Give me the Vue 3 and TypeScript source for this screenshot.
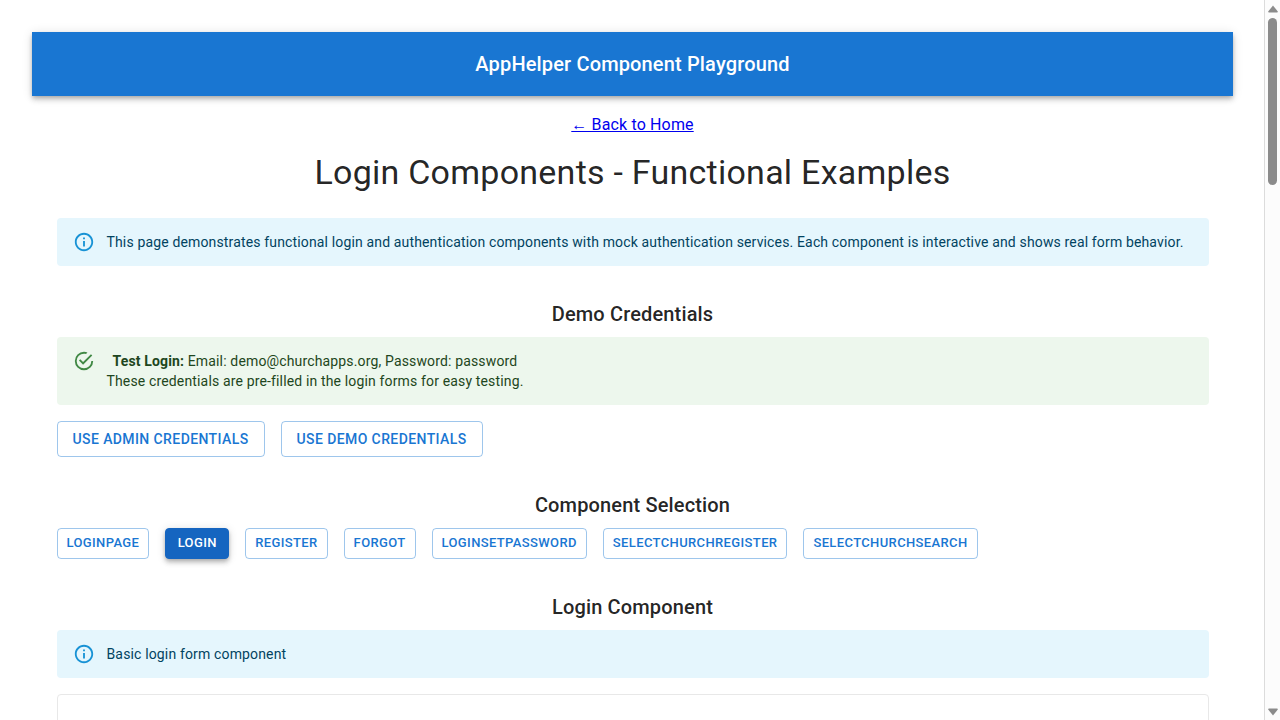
<script setup lang="ts">
import { ref } from 'vue'

const components: string[] = [
  'LoginPage',
  'Login',
  'Register',
  'Forgot',
  'LoginSetPassword',
  'SelectChurchRegister',
  'SelectChurchSearch',
]
const selected = ref<string>('Login')

const infoIcon =
  'M11,7h2v2h-2V7z M11,11h2v6h-2V11z M12,2C6.48,2,2,6.48,2,12s4.48,10,10,10s10-4.48,10-10S17.52,2,12,2z M12,20c-4.41,0-8-3.59-8-8s3.59-8,8-8s8,3.59,8,8S16.41,20,12,20z'
const successIcon =
  'M20,12A8,8 0 0,1 12,20A8,8 0 0,1 4,12A8,8 0 0,1 12,4C12.76,4 13.5,4.11 14.2,4.31L15.77,2.74C14.61,2.26 13.34,2 12,2A10,10 0 0,0 2,12A10,10 0 0,0 12,22A10,10 0 0,0 22,12M7.91,10.08L6.5,11.5L11,16L21,6L19.59,4.58L11,13.17L7.91,10.08Z'
</script>

<template>
  <div class="viewport">
    <div class="page">
      <header class="app-bar">
        <h1 class="heading">AppHelper Component Playground</h1>
      </header>

      <main class="content">
        <p class="back"><a href="#home">← Back to Home</a></p>
        <h2 class="title">Login Components - Functional Examples</h2>

        <div class="alert info" role="note">
          <svg class="icon" viewBox="0 0 24 24" aria-hidden="true"><path :d="infoIcon" /></svg>
          <p>
            This page demonstrates functional login and authentication components with mock
            authentication services. Each component is interactive and shows real form behavior.
          </p>
        </div>

        <section class="section">
          <h3 class="heading">Demo Credentials</h3>
          <div class="alert success" role="note">
            <svg class="icon" viewBox="0 0 24 24" aria-hidden="true"><path :d="successIcon" /></svg>
            <p>
              <strong>Test Login:</strong> Email: demo@churchapps.org, Password: password<br />
              These credentials are pre-filled in the login forms for easy testing.
            </p>
          </div>
          <div class="row actions">
            <button type="button" class="btn">Use Admin Credentials</button>
            <button type="button" class="btn">Use Demo Credentials</button>
          </div>
        </section>

        <section class="section">
          <h3 class="heading">Component Selection</h3>
          <div class="row">
            <button
              v-for="name in components"
              :key="name"
              type="button"
              class="btn small"
              :class="{ contained: name === selected }"
              :aria-pressed="name === selected"
              @click="selected = name"
            >
              {{ name }}
            </button>
          </div>
        </section>

        <section class="section">
          <h3 class="heading">{{ selected }} Component</h3>
          <div class="alert info" role="note">
            <svg class="icon" viewBox="0 0 24 24" aria-hidden="true"><path :d="infoIcon" /></svg>
            <p>Basic login form component</p>
          </div>
          <div class="card"></div>
        </section>
      </main>
    </div>

    <div class="scrollbar" aria-hidden="true">
      <svg class="arrow" viewBox="0 0 10 8"><path d="M5 0.5 L9.8 6.4 Q10 7.6 9 7.6 H1 Q0 7.6 0.2 6.4 Z" /></svg>
      <div class="track"><div class="thumb"></div></div>
      <svg class="arrow" viewBox="0 0 10 8"><path d="M5 7.5 L9.8 1.6 Q10 0.4 9 0.4 H1 Q0 0.4 0.2 1.6 Z" /></svg>
    </div>
  </div>
</template>

<style>
body {
  margin: 0;
  background: #fff;
}
</style>

<style scoped>
.viewport {
  display: flex;
  height: 100vh;
  overflow: hidden;
  font-family: Roboto, "Liberation Sans", sans-serif;
  font-size: 16px;
  line-height: 24px;
  color: rgba(0, 0, 0, 0.87);
}

.page {
  flex: 1;
  min-width: 0;
  padding: 32px 32px 0;
}

h1,
h2,
h3,
p {
  margin: 0;
}

.heading {
  font-size: 20px;
  line-height: 32px;
  font-weight: 500;
  letter-spacing: 0.0075em;
  text-align: center;
}

.app-bar {
  padding: 16px 24px;
  color: #fff;
  background: #1976d2;
  box-shadow:
    0 2px 4px -1px rgba(0, 0, 0, 0.2),
    0 4px 5px 0 rgba(0, 0, 0, 0.14),
    0 1px 10px 0 rgba(0, 0, 0, 0.12);
}

.content {
  box-sizing: border-box;
  max-width: 1200px;
  margin: 0 auto;
  padding: 17px 24px 0;
}

.back {
  font-family: Roboto, "Liberation Serif", serif;
  letter-spacing: 0.00938em;
  text-align: center;
}

.back a {
  color: #0000ee;
}

.title {
  margin: 14px 0 25px;
  font-size: 34px;
  line-height: 42px;
  font-weight: 400;
  letter-spacing: 0.00735em;
  text-align: center;
}

.alert {
  display: flex;
  padding: 6px 16px;
  border-radius: 4px;
  font-size: 14px;
  line-height: 20px;
  letter-spacing: 0.01071em;
}

.alert p {
  padding: 8px 0;
}

.icon {
  flex: none;
  width: 22px;
  height: 22px;
  margin-right: 12px;
  padding: 7px 0;
  opacity: 0.9;
}

.info {
  color: #014361;
  background: #e5f6fd;
}

.info .icon {
  fill: #0288d1;
}

.success {
  color: #1e4620;
  background: #edf7ed;
}

.success .icon {
  fill: #2e7d32;
}

.success strong {
  margin-left: 6px;
}

.section {
  margin-top: 32px;
}

.section .heading {
  margin-bottom: 7px;
}

.row {
  display: flex;
  flex-wrap: wrap;
  gap: 16px;
}

.actions {
  margin-top: 16px;
}

.btn {
  box-sizing: border-box;
  min-width: 64px;
  padding: 5px 15px;
  border: 1px solid rgba(25, 118, 210, 0.42);
  border-radius: 4px;
  background: transparent;
  color: #1976d2;
  font-family: inherit;
  font-size: 14px;
  line-height: 24px;
  font-weight: 500;
  letter-spacing: 0.02857em;
  text-transform: uppercase;
  cursor: pointer;
}

.small {
  padding: 2px 9px 4px;
  font-size: 13px;
  line-height: 23px;
}

.contained {
  border-color: #1565c0;
  background: #1565c0;
  color: #fff;
  box-shadow:
    0 2px 4px -1px rgba(0, 0, 0, 0.2),
    0 4px 5px 0 rgba(0, 0, 0, 0.14),
    0 1px 10px 0 rgba(0, 0, 0, 0.12);
}

.card {
  min-height: 320px;
  margin-top: 16px;
  border: 1px solid #e8e8e8;
  border-radius: 4px;
}

.scrollbar {
  display: flex;
  flex-direction: column;
  align-items: center;
  gap: 5px;
  box-sizing: border-box;
  width: 16px;
  margin-left: -1px;
  padding: 5px 0 4px;
  border-left: 1px solid #dcdcdc;
  background: #fcfcfc;
}

.arrow {
  width: 10px;
  height: 8px;
  fill: #8b8b8b;
}

.track {
  flex: 1;
}

.thumb {
  width: 9px;
  height: 24.4%;
  border-radius: 5px;
  background: #8b8b8b;
}
</style>
